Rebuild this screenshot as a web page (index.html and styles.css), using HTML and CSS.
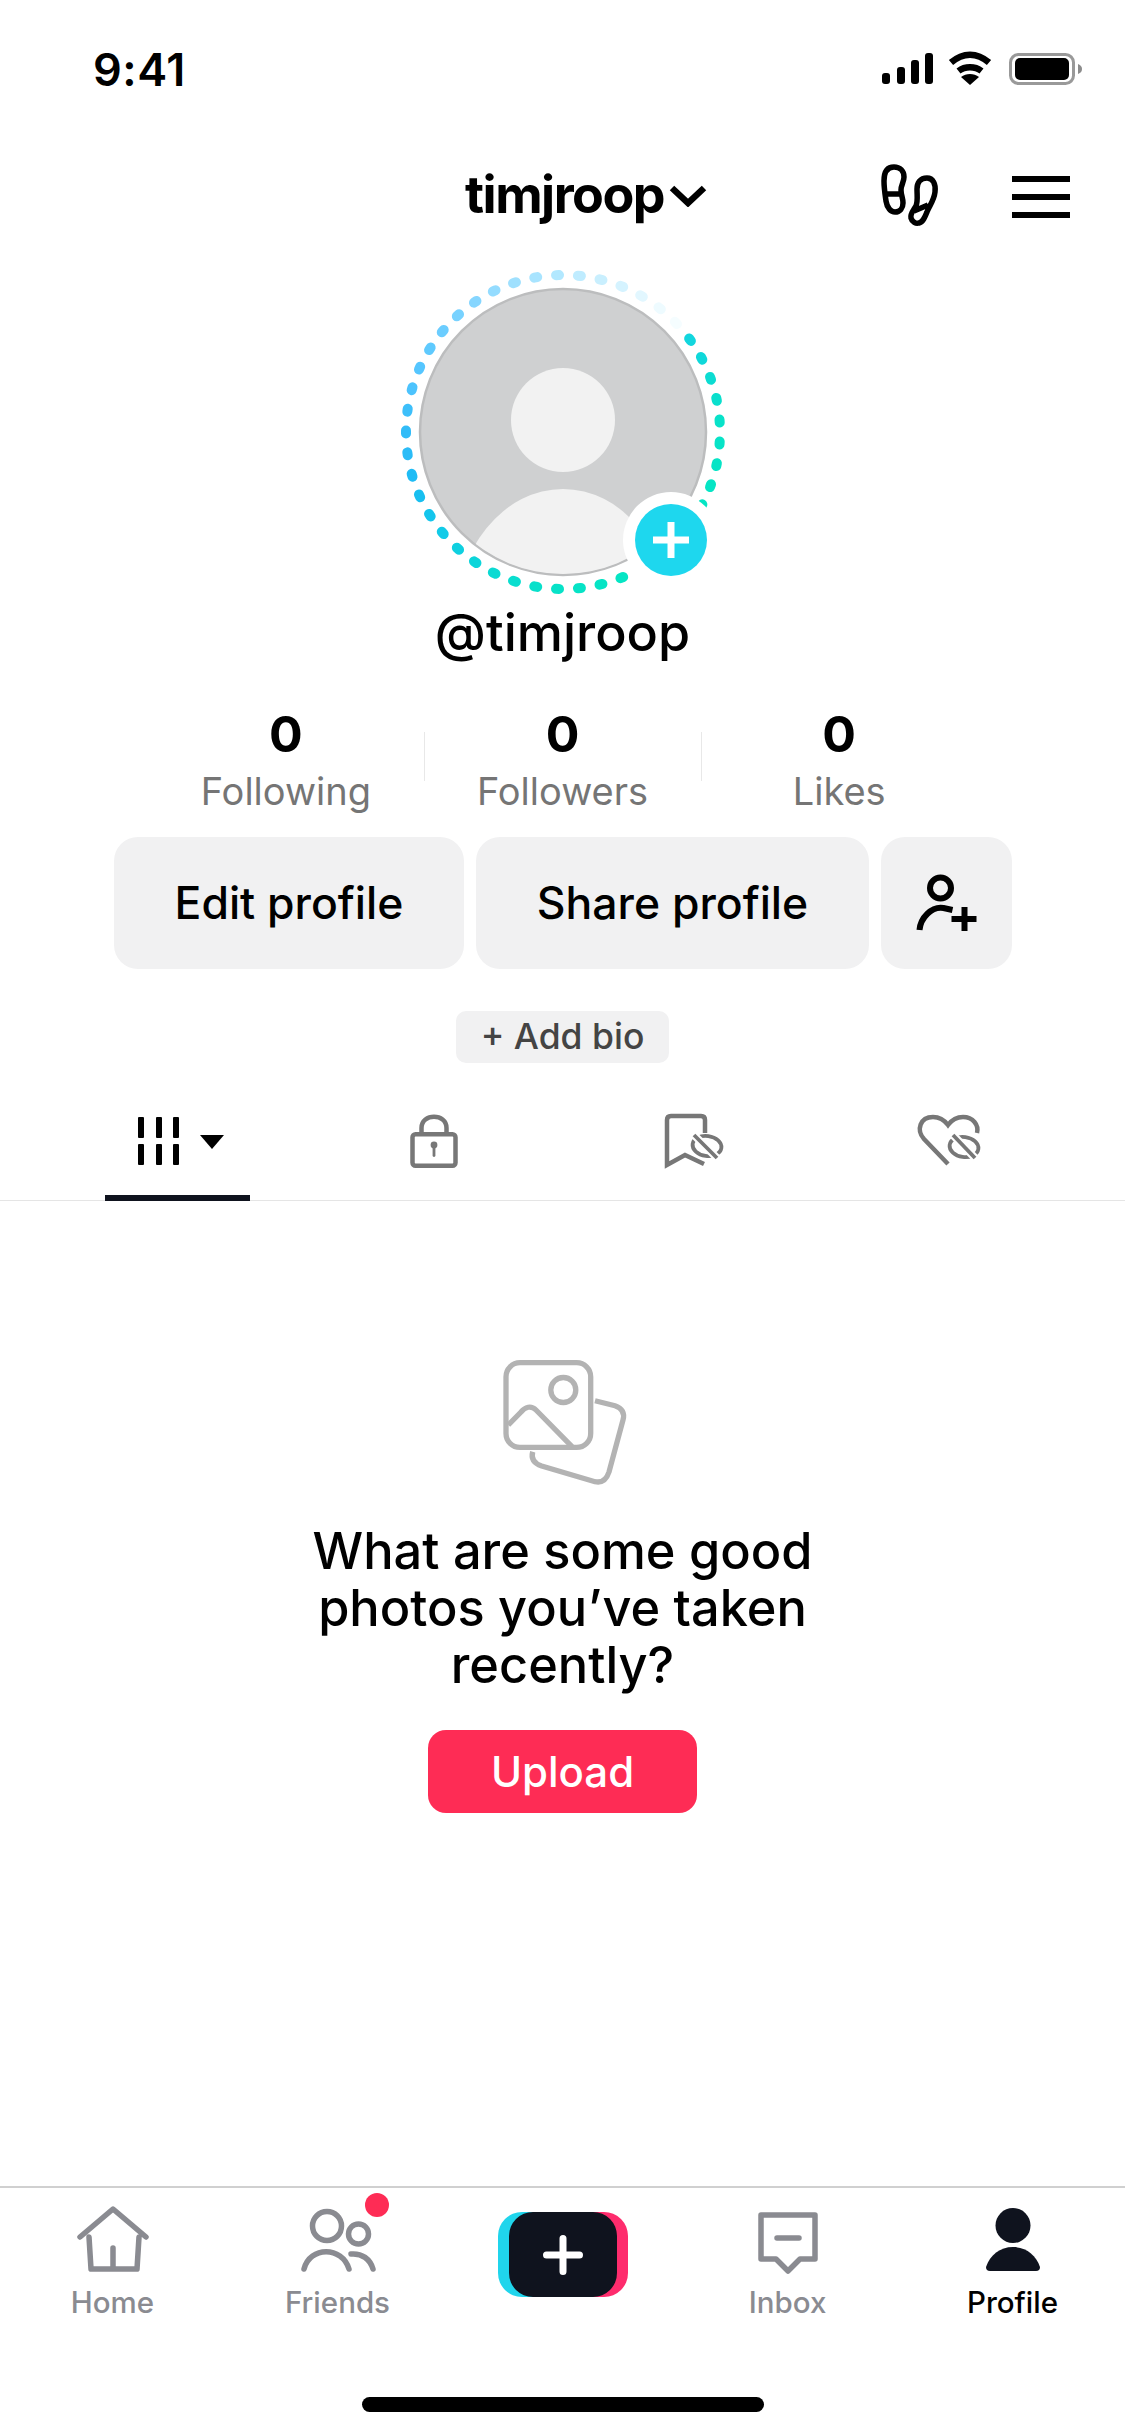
FILE: index.html
```html
<!DOCTYPE html>
<html lang="en">
<head>
<meta charset="utf-8">
<title>Profile</title>
<link rel="stylesheet" href="styles.css">
</head>
<body>
<div class="page">
  <div class="status">
    <span class="time">9:41</span>
    <svg class="status-icons" width="220" height="60" viewBox="0 0 220 60">
      <rect x="12" y="33" width="8" height="11" rx="3"/>
      <rect x="27" y="27" width="8" height="17" rx="3"/>
      <rect x="41" y="20" width="8" height="24" rx="3"/>
      <rect x="55" y="13" width="8" height="31" rx="3"/>
      <path class="wifi" d="M81 22.5C93 12 107 12 119 22.5M88.500 31C95 26 105 26 111.500 31"/>
      <path d="M100 45L91 37C96 33 104 33 109 37Z"/>
      <rect class="batt" x="140.500" y="14.500" width="63" height="29" rx="8"/>
      <rect x="145" y="18" width="54" height="22" rx="5"/>
      <path class="nub" d="M208 24C211 25 212 27 212 29C212 31 211 33 208 34Z"/>
    </svg>
  </div>

  <header class="top">
    <div class="account">
      <span class="handle">timjroop</span>
      <svg width="38" height="24" viewBox="0 0 38 24"><path class="chev" d="M3 5L19 20L35 5"/></svg>
    </div>
    <div class="top-actions">
      <svg class="feet" width="90" height="80" viewBox="0 0 90 80">
        <path d="M24 10C16 10 14 17 14 24C14 31 15 37 16 44C17 51 21 55 25 55C30 55 33 51 33 46C33 41 31 38 31 33C31 28 34 25 34 20C34 14 30 10 24 10ZM16 37H31"/>
        <path d="M57 21C50 21 47 26 47 32C47 39 48 44 46 49C43 54 40 57 41 61C42 65 46 67 49 66C53 65 55 60 57 55C59 49 64 44 65 35C66 27 63 21 57 21ZM44 54L58 48"/>
      </svg>
      <div class="burger"><i></i><i></i><i></i></div>
    </div>
  </header>

  <section class="avatar">
    <svg width="340" height="340" viewBox="-170 -170 340 340">
      <defs><clipPath id="disc"><circle r="142"/></clipPath></defs>
      <g class="ring">
        <line x1="157" y1="-1.500" x2="157" y2="1.500" stroke="#07e3c7" transform="rotate(4)"/>
        <line x1="157" y1="-1.500" x2="157" y2="1.500" stroke="#06e4c6" transform="rotate(12)"/>
        <line x1="157" y1="-1.500" x2="157" y2="1.500" stroke="#06e5c5" transform="rotate(20)"/>
        <line x1="157" y1="-1.500" x2="157" y2="1.500" stroke="#05e5c4" transform="rotate(28)"/>
        <line x1="157" y1="-1.500" x2="157" y2="1.500" stroke="#05e5c4" transform="rotate(68)"/>
        <line x1="157" y1="-1.500" x2="157" y2="1.500" stroke="#06e4c5" transform="rotate(76)"/>
        <line x1="157" y1="-1.500" x2="157" y2="1.500" stroke="#06e3c6" transform="rotate(84)"/>
        <line x1="157" y1="-1.500" x2="157" y2="1.500" stroke="#07e2c8" transform="rotate(92)"/>
        <line x1="157" y1="-1.500" x2="157" y2="1.500" stroke="#08e0cb" transform="rotate(100)"/>
        <line x1="157" y1="-1.500" x2="157" y2="1.500" stroke="#0adecf" transform="rotate(108)"/>
        <line x1="157" y1="-1.500" x2="157" y2="1.500" stroke="#0bdad3" transform="rotate(116)"/>
        <line x1="157" y1="-1.500" x2="157" y2="1.500" stroke="#0cd5da" transform="rotate(124)"/>
        <line x1="157" y1="-1.500" x2="157" y2="1.500" stroke="#0fd0e0" transform="rotate(132)"/>
        <line x1="157" y1="-1.500" x2="157" y2="1.500" stroke="#12cbe8" transform="rotate(140)"/>
        <line x1="157" y1="-1.500" x2="157" y2="1.500" stroke="#14c5ec" transform="rotate(148)"/>
        <line x1="157" y1="-1.500" x2="157" y2="1.500" stroke="#18bff0" transform="rotate(156)"/>
        <line x1="157" y1="-1.500" x2="157" y2="1.500" stroke="#1fbcf5" transform="rotate(164)"/>
        <line x1="157" y1="-1.500" x2="157" y2="1.500" stroke="#2bbcf7" transform="rotate(172)"/>
        <line x1="157" y1="-1.500" x2="157" y2="1.500" stroke="#32bcf8" transform="rotate(180)"/>
        <line x1="157" y1="-1.500" x2="157" y2="1.500" stroke="#3dbffa" transform="rotate(188)"/>
        <line x1="157" y1="-1.500" x2="157" y2="1.500" stroke="#4cc3fd" transform="rotate(196)"/>
        <line x1="157" y1="-1.500" x2="157" y2="1.500" stroke="#55c6ff" transform="rotate(204)"/>
        <line x1="157" y1="-1.500" x2="157" y2="1.500" stroke="#5fcafe" transform="rotate(212)"/>
        <line x1="157" y1="-1.500" x2="157" y2="1.500" stroke="#6bcdff" transform="rotate(220)"/>
        <line x1="157" y1="-1.500" x2="157" y2="1.500" stroke="#78d2ff" transform="rotate(228)"/>
        <line x1="157" y1="-1.500" x2="157" y2="1.500" stroke="#86d6ff" transform="rotate(236)"/>
        <line x1="157" y1="-1.500" x2="157" y2="1.500" stroke="#94dcff" transform="rotate(244)"/>
        <line x1="157" y1="-1.500" x2="157" y2="1.500" stroke="#9fe0fe" transform="rotate(252)"/>
        <line x1="157" y1="-1.500" x2="157" y2="1.500" stroke="#a8e4ff" transform="rotate(260)"/>
        <line x1="157" y1="-1.500" x2="157" y2="1.500" stroke="#b2e8ff" transform="rotate(268)"/>
        <line x1="157" y1="-1.500" x2="157" y2="1.500" stroke="#bfecff" transform="rotate(276)"/>
        <line x1="157" y1="-1.500" x2="157" y2="1.500" stroke="#c9effe" transform="rotate(284)"/>
        <line x1="157" y1="-1.500" x2="157" y2="1.500" stroke="#d5f3ff" transform="rotate(292)"/>
        <line x1="157" y1="-1.500" x2="157" y2="1.500" stroke="#e2f7ff" transform="rotate(300)"/>
        <line x1="157" y1="-1.500" x2="157" y2="1.500" stroke="#eefbff" transform="rotate(308)"/>
        <line x1="157" y1="-1.500" x2="157" y2="1.500" stroke="#f5fdff" transform="rotate(316)"/>
        <line x1="157" y1="-1.500" x2="157" y2="1.500" stroke="#12d6de" transform="rotate(324)"/>
        <line x1="157" y1="-1.500" x2="157" y2="1.500" stroke="#0fd8da" transform="rotate(332)"/>
        <line x1="157" y1="-1.500" x2="157" y2="1.500" stroke="#0cdcd2" transform="rotate(340)"/>
        <line x1="157" y1="-1.500" x2="157" y2="1.500" stroke="#0adfcd" transform="rotate(348)"/>
        <line x1="157" y1="-1.500" x2="157" y2="1.500" stroke="#08e2c9" transform="rotate(356)"/>
      </g>
      <circle class="disc" r="143"/>
      <g clip-path="url(#disc)">
        <circle class="pale" cy="-12" r="52"/>
        <ellipse class="pale" cy="190" rx="108" ry="133"/>
      </g>
    </svg>
    <div class="badge">
      <svg width="72" height="72" viewBox="0 0 72 72"><path d="M36 18V54M18 36H54"/></svg>
    </div>
  </section>

  <h1 class="username">@timjroop</h1>

  <div class="stats">
    <div class="stat"><b>0</b><span>Following</span></div>
    <div class="stat"><b>0</b><span>Followers</span></div>
    <div class="stat"><b>0</b><span>Likes</span></div>
  </div>

  <div class="actions">
    <button class="btn edit">Edit profile</button>
    <button class="btn share">Share profile</button>
    <button class="btn add" aria-label="Add friends">
      <svg width="100" height="90" viewBox="-3.500 -2 100 90">
        <circle cx="40" cy="28" r="10.500"/>
        <path d="M19 70C20 58 31 46 43 48L52 50M51 59H76M64 47V71"/>
      </svg>
    </button>
  </div>

  <div class="bio-row"><span class="bio">+ Add bio</span></div>

  <nav class="tabs">
    <div class="tab active">
      <svg width="95" height="60" viewBox="0 0 95 60">
        <rect x="8" y="7" width="6" height="21" rx="1"/>
        <rect x="26" y="7" width="6" height="21" rx="1"/>
        <rect x="43" y="7" width="6" height="21" rx="1"/>
        <rect x="8" y="34" width="6" height="21" rx="1"/>
        <rect x="26" y="34" width="6" height="21" rx="1"/>
        <rect x="43" y="34" width="6" height="21" rx="1"/>
        <path d="M70 25H94L82 39Z"/>
      </svg>
    </div>
    <div class="tab">
      <svg class="tab-line" width="60" height="60" viewBox="0 0 60 60">
        <rect x="7.500" y="24.200" width="43" height="31.600" rx="3"/>
        <path d="M16.500 24V18C16.500 3 41.500 3 41.500 18V24"/>
        <circle class="keyhole" cx="29" cy="35" r="3.400"/>
        <rect class="keyhole" x="27.600" y="36" width="2.800" height="11" rx="1.400"/>
      </svg>
    </div>
    <div class="tab">
      <svg class="tab-line" width="90" height="60" viewBox="-2 5 90 60">
        <path d="M55 28V15Q55 11 51 11H21Q17 11 17 15V60L35 50L54 59"/>
        <ellipse class="eye" cx="57" cy="41" rx="14.500" ry="10" transform="rotate(8 57 41)"/>
        <path class="gap" d="M44 30L67 53"/>
        <path class="eye" d="M44 30L67 53"/>
      </svg>
    </div>
    <div class="tab">
      <svg class="tab-line" width="90" height="60" viewBox="1 5 90 60">
        <path d="M43 59L19 34C11 25 15 12 28 12C35 12 40 16 43 20C46 16 51 12 58 12C68 12 74 20 72 28"/>
        <ellipse class="eye" cx="59" cy="42" rx="14.500" ry="10" transform="rotate(8 59 42)"/>
        <path class="gap" d="M48 30L70 53"/>
        <path class="eye" d="M48 30L70 53"/>
      </svg>
    </div>
  </nav>

  <main class="empty">
    <svg class="photos" width="140" height="140" viewBox="0 0 140 140">
      <rect x="13" y="12.700" width="84.700" height="84.700" rx="14"/>
      <circle cx="70.300" cy="40" r="12.500"/>
      <path d="M15.300 75L28 62C32 57 38 55 43 60L79 96.700"/>
      <path d="M102 50.700L122 55.700C129 58 132 63 130 70L116 122C113 131 108 133 102 131.700L48.700 116C40 113 38 108 39.700 101.700"/>
    </svg>
    <h2 class="prompt">What are some good photos you’ve taken recently?</h2>
    <button class="upload">Upload</button>
  </main>

  <footer class="bar">
    <div class="nav">
      <div class="item">
        <svg class="nav-line" width="90" height="80" viewBox="67 2200 90 80">
          <path d="M79 2237L112 2209L145 2237M88 2237L90 2269H136L138 2237M112 2248V2269"/>
        </svg>
        <span>Home</span>
      </div>
      <div class="item">
        <div class="friends-icon">
          <svg class="nav-line" width="90" height="80" viewBox="293 2200 90 80">
            <circle cx="327" cy="2226" r="14.500"/>
            <circle cx="358.500" cy="2234" r="10"/>
            <path d="M304 2269C310 2246 342 2246 349 2269M351 2254C362 2253 370 2259 373 2269"/>
          </svg>
          <i class="dot"></i>
        </div>
        <span>Friends</span>
      </div>
      <div class="item">
        <div class="create">
          <div class="create-face">
            <svg width="48" height="48" viewBox="0 0 48 48"><path d="M24 7.500V40.500M7.500 24H40.500"/></svg>
          </div>
        </div>
      </div>
      <div class="item">
        <svg class="nav-line" width="90" height="80" viewBox="743 2200 90 80">
          <path d="M761 2215H815V2259H800L788 2271L776 2259H761ZM777 2238H799"/>
        </svg>
        <span>Inbox</span>
      </div>
      <div class="item current">
        <svg class="solid" width="90" height="80" viewBox="968 2200 90 80">
          <ellipse cx="1013" cy="2225.500" rx="17.500" ry="17.500"/>
          <path d="M986 2267C990 2255 1000 2247 1013 2247C1026 2247 1036 2255 1040 2267Q1040 2271 1036 2271H990Q986 2271 986 2267Z"/>
        </svg>
        <span>Profile</span>
      </div>
    </div>
    <div class="home-bar"></div>
  </footer>
</div>
</body>
</html>
```

FILE: styles.css
```css
* { box-sizing: border-box; }
html, body { margin: 0; padding: 0; background: #fff; }
body { font-family: Inter, "Noto Sans", "Liberation Sans", sans-serif; color: #000; }
button { font: inherit; border: 0; padding: 0; }
h1, h2 { margin: 0; }

.page { width: 1125px; height: 2436px; display: flex; flex-direction: column; overflow: hidden; background: #fff; }

/* status bar */
.status { height: 115px; padding: 25px 35px 0 93px; display: flex; align-items: center; justify-content: space-between; }
.time { font-size: 45px; font-weight: 600; line-height: 50px; letter-spacing: 0.5px; }
.status-icons { fill: #000; }
.wifi { fill: none; stroke: #000; stroke-width: 6.5; }
.batt { fill: none; stroke: #999; stroke-width: 3; }
.nub { fill: #8c8c8c; }

/* header */
.top { height: 147px; padding: 16px 55px 4px 465px; display: flex; align-items: center; justify-content: space-between; }
.account { display: flex; align-items: center; gap: 5px; }
.handle { font-size: 52px; font-weight: 700; line-height: 60px; letter-spacing: -1.500px; }
.chev { fill: none; stroke: #000; stroke-width: 6.500; }
.top-actions { display: flex; align-items: center; gap: 52px; margin-top: 4px; }
.feet { fill: none; stroke: #000; stroke-width: 5.500; }
.burger { width: 58px; display: flex; flex-direction: column; gap: 12px; }
.burger i { display: block; height: 6px; background: #000; }

/* avatar */
.avatar { position: relative; width: 340px; height: 340px; margin: 0 auto; flex: none; }
.avatar svg { display: block; }
.ring line { stroke-width: 10; stroke-linecap: round; }
.disc { fill: #cfd0d1; stroke: #bcbdbe; stroke-width: 2.5; }
.pale { fill: #f2f2f2; }
.badge { position: absolute; left: 230px; top: 230px; width: 96px; height: 96px; border-radius: 50%; background: #fff; display: flex; align-items: center; justify-content: center; }
.badge svg { border-radius: 50%; background: #1ed7ee; }
.badge path { fill: none; stroke: #fff; stroke-width: 7; }

.username { font-size: 52px; font-weight: 500; line-height: 60px; text-align: center; padding-top: 1px; }

/* stats */
.stats { margin: 43px auto 0; width: 830px; display: grid; grid-template-columns: repeat(3, 1fr); }
.stat { display: flex; flex-direction: column; align-items: center; }
.stat + .stat { background: linear-gradient(#e8e8e8, #e8e8e8) left 26px / 1px 49px no-repeat; }
.stat b { font-size: 50px; font-weight: 700; line-height: 56px; }
.stat span { margin-top: 7px; font-size: 38px; line-height: 44px; color: #757575; }

/* actions */
.actions { margin: 24px 113px 0 114px; display: flex; gap: 12px; }
.btn { height: 132px; border-radius: 24px; background: #f1f1f2; color: #000; font-size: 44.500px; font-weight: 500; display: flex; align-items: center; justify-content: center; }
.edit { width: 350px; }
.share { width: 393px; }
.add { width: 131px; }
.add svg { fill: none; stroke: #000; stroke-width: 6; }

.bio-row { margin-top: 42px; display: flex; justify-content: center; }
.bio { width: 213px; height: 52px; border-radius: 10px; background: #f1f1f2; color: #444; font-size: 35.500px; font-weight: 500; line-height: 52px; text-align: center; }

/* tabs */
.tabs { height: 138px; padding: 0 45px 0 48px; border-bottom: 1px solid #e5e5e5; display: grid; grid-template-columns: repeat(4, 1fr); flex: none; }
.tab { padding-top: 47px; display: flex; justify-content: center; align-items: flex-start; }
.tab.active { width: 145px; height: 138px; margin-left: 57px; border-bottom: 6px solid #0f131e; }
.tab-line { fill: none; stroke: #777; stroke-width: 4.5; }
.keyhole { fill: #777; stroke: none; }
.eye { stroke-width: 3.800; }
.gap { stroke: #fff; stroke-width: 8; }

/* empty */
.empty { flex: 1; padding-top: 149px; display: flex; flex-direction: column; align-items: center; }
.photos { fill: none; stroke: #b3b3b3; stroke-width: 5.300; flex: none; }
.prompt { margin-top: 32px; width: 560px; font-size: 50.500px; font-weight: 500; line-height: 57px; text-align: center; color: #000; }
.upload { margin-top: 37px; width: 269px; height: 83px; border-radius: 18px; background: #fe2c55; color: #fff; font-size: 42px; font-weight: 500; }

/* tab bar */
.bar { border-top: 2px solid #d0d0d0; flex: none; }
.nav { padding-top: 12px; display: grid; grid-template-columns: repeat(5, 225px); }
.item { height: 120px; display: flex; flex-direction: column; align-items: center; color: #8a8b91; }
.item svg { display: block; }
.item span { margin-top: 4px; font-size: 29.500px; font-weight: 500; line-height: 36px; }
.item.current span { color: #000; }
.nav-line { fill: none; stroke: #8a8b91; stroke-width: 5.500; stroke-linejoin: round; stroke-linecap: round; }
.solid { fill: #0f131e; }
.friends-icon { position: relative; }
.dot { position: absolute; left: 72px; top: -7px; width: 24px; height: 24px; border-radius: 50%; background: #fe2c55; }
.create { margin-top: 12px; width: 130px; height: 85px; border-radius: 24px; background: linear-gradient(90deg, #20d5ec 50%, #fe2c6d 50%); display: flex; justify-content: center; }
.create-face { width: 108px; height: 85px; border-radius: 24px; background: #0f131e; display: flex; align-items: center; justify-content: center; }
.create-face path { fill: none; stroke: #fff; stroke-width: 7; stroke-linecap: round; }
.home-bar { margin: 77px auto 24px; width: 402px; height: 15px; border-radius: 8px; background: #000; }
```
